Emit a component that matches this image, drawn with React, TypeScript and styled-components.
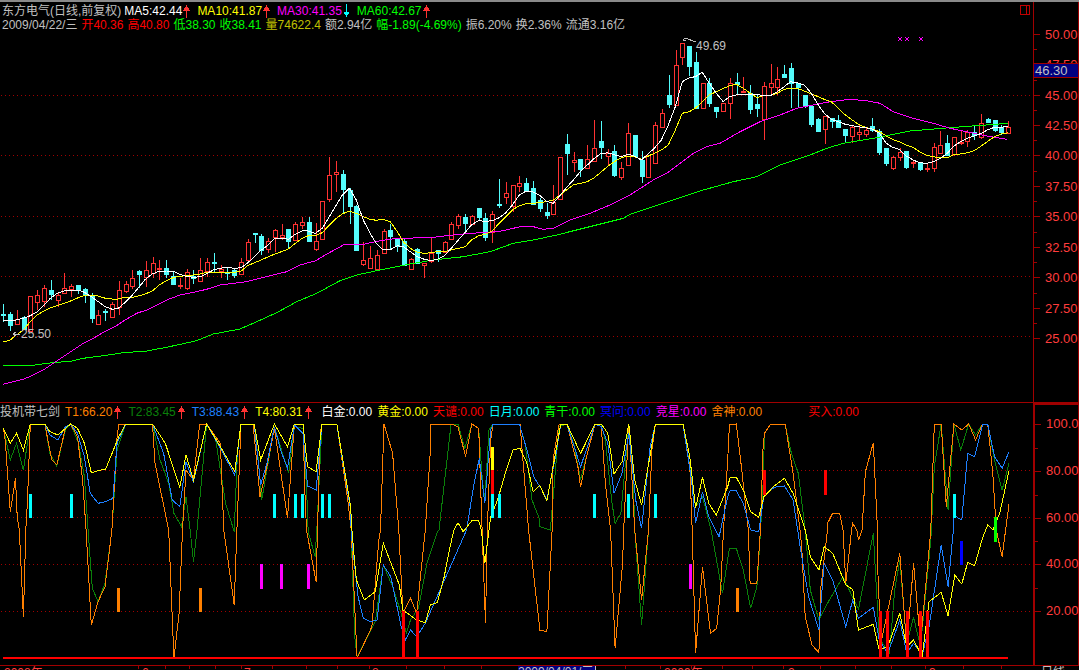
import React from 'react';
import styled, { createGlobalStyle } from 'styled-components';

const GlobalStyle = createGlobalStyle`
  html, body { margin: 0; background: #000; }
  body { font-family: "Liberation Sans", "Noto Sans CJK SC", sans-serif; font-size: 12px; }
`;

const colors = {
  grid: '#a00000',
  label: '#ff3c3c',
  grey: '#c0c0c0',
  up: '#ff3232',
  down: '#54fcfc',
  white: '#ffffff',
  yellow: '#ffff00',
  magenta: '#ff00ff',
  lime: '#00ff00',
  red: '#ff0000',
  orange: '#ff8000',
  forest: '#0a800a',
  sky: '#1e80ff',
  blue: '#0000ff',
  cyan: '#00ffff',
};

const Page = styled.div`
  width: 1079px;
  height: 670px;
  background: #000;
  overflow: hidden;
  display: flex;
  flex-direction: column;
  border-top: 2px solid #8a8a8a;
  box-sizing: border-box;
`;

const PricePanel = styled.div`
  height: 401px;
  display: flex;
  flex: none;
  border-bottom: 1px solid ${colors.grid};
  box-sizing: border-box;
`;

const IndicatorPanel = styled.div`
  height: 262px;
  display: flex;
  flex: none;
`;

const ChartArea = styled.div`
  position: relative;
  width: 1033px;
  flex: none;
`;

const Plot = styled.svg`
  display: block;
  width: 100%;
  height: 100%;
`;

const Axis = styled.div<{ $heavy?: boolean }>`
  position: relative;
  width: 44px;
  flex: none;
  box-sizing: content-box;
  border-left: ${(p) => (p.$heavy ? 2 : 1)}px solid ${colors.grid};
  border-right: 1px solid ${colors.grid};
  ${(p) => p.$heavy && `border-top: 2px solid ${colors.grid}; margin-left: 0; width: 43px;`}
`;

const Tick = styled.div<{ $major?: boolean }>`
  position: absolute;
  left: 0;
  height: 1px;
  width: ${(p) => (p.$major ? 6 : 3)}px;
  background: ${colors.grid};
`;

const TickLabel = styled.span`
  position: absolute;
  left: 11px;
  line-height: 14px;
  font-size: 13px;
  color: ${colors.label};
`;

const CurrentPrice = styled.div`
  position: absolute;
  left: 0;
  right: 0;
  top: 61px;
  height: 15px;
  box-sizing: border-box;
  padding-left: 1px;
  background: #000080;
  border-top: 1px solid ${colors.grid};
  border-bottom: 1px solid ${colors.grid};
  color: ${colors.grey};
  font-size: 13px;
  line-height: 13px;
`;

const PriceHeader = styled.div`
  position: absolute;
  top: 2px;
  left: 2px;
  display: flex;
  flex-direction: column;
  gap: 0;
`;

const HeaderRow = styled.div<{ $gap?: number }>`
  display: flex;
  align-items: center;
  height: 14px;
  gap: ${(p) => p.$gap ?? 0}px;
  white-space: nowrap;
  line-height: 14px;
`;

const Item = styled.span<{ $color: string; $right?: number }>`
  color: ${(p) => p.$color};
  margin-right: ${(p) => p.$right ?? 0}px;
`;

const Marked = styled.span<{ $right: number; $gap?: number }>`
  display: inline-flex;
  align-items: center;
  gap: ${(p) => p.$gap ?? 1}px;
  margin-right: ${(p) => p.$right}px;
`;

const IndicatorHeader = styled.div`
  position: absolute;
  top: 1px;
  left: 0;
  display: flex;
  align-items: center;
  height: 16px;
  white-space: nowrap;
  line-height: 16px;
`;

const PriceNote = styled.span`
  position: absolute;
  color: ${colors.grey};
  line-height: 14px;
`;

const WindowBox = styled.div`
  position: absolute;
  top: 3px;
  left: 1020px;
  width: 8px;
  height: 8px;
  border: 1px solid #c00000;
  &::after {
    content: '';
    position: absolute;
    top: 0;
    bottom: 0;
    right: 0;
    width: 2px;
    border-left: 1px solid #c00000;
  }
`;

const TimeBar = styled.div`
  display: flex;
  height: 5px;
  flex: none;
  border-top: 1px solid ${colors.grid};
  overflow: hidden;
`;

const TimeScale = styled.div`
  position: relative;
  width: 1033px;
  flex: none;
`;

const TimeTick = styled.i<{ $long?: boolean }>`
  position: absolute;
  top: 0;
  width: 1px;
  height: ${(p) => (p.$long ? 5 : 3)}px;
  background: ${colors.grid};
`;

const TimeLabel = styled.span`
  position: absolute;
  top: 1px;
  color: ${colors.label};
  font-size: 12px;
  line-height: 13px;
`;

const CursorDate = styled.span`
  position: absolute;
  top: 0;
  left: 518px;
  width: 77px;
  height: 5px;
  background: #000080;
  color: ${colors.grey};
  font-size: 12px;
  line-height: 13px;
  border-right: 1px solid ${colors.grey};
`;

const PeriodCell = styled.div`
  margin-left: 8px;
  color: ${colors.grey};
  font-size: 12px;
  line-height: 13px;
`;

/* ---------- price data, read off the chart in three strips ---------- */

type Row = [string, number, number, number, number];
type Candle = { up: boolean; top: number; bottom: number; hi: number; lo: number };
type Pt = [number, number];

const strip = (base: number, rows: Row[]): Candle[] =>
  rows.map(([k, a, b, h, l]) => ({
    up: k === 'r',
    top: base + a / 3,
    bottom: base + b / 3,
    hi: base + h / 3,
    lo: base + l / 3,
  }));

const candles: Candle[] = [
  ...strip(130, [
    ['c', 552, 554, 522, 575], ['c', 552, 585, 545, 603], ['r', 568, 582, 540, 585], ['c', 562, 596, 558, 600],
    ['r', 498, 603, 498, 606], ['r', 495, 515, 480, 540], ['r', 475, 513, 465, 530], ['c', 480, 492, 450, 510],
    ['r', 495, 510, 485, 530], ['r', 475, 490, 430, 492], ['r', 469, 477, 462, 500], ['c', 465, 478, 465, 492],
    ['c', 478, 495, 475, 520], ['c', 495, 564, 490, 578], ['r', 555, 581, 540, 583], ['c', 543, 546, 538, 573],
    ['r', 523, 560, 515, 560], ['r', 481, 530, 453, 555], ['r', 463, 484, 453, 490], ['r', 445, 468, 420, 478],
    ['c', 423, 431, 420, 475], ['r', 421, 441, 392, 470], ['r', 400, 429, 381, 445], ['r', 414, 417, 390, 450],
    ['c', 415, 431, 390, 445], ['c', 438, 461, 425, 462], ['r', 465, 467, 445, 476], ['r', 427, 473, 418, 480],
    ['c', 438, 445, 420, 462], ['r', 421, 452, 385, 453], ['r', 397, 422, 385, 440], ['c', 396, 400, 370, 430],
    ['r', 417, 423, 405, 445], ['c', 426, 429, 410, 450], ['c', 421, 435, 418, 443], ['r', 397, 433, 385, 435],
    ['r', 337, 391, 328, 392], ['c', 310, 313, 310, 340], ['c', 318, 360, 312, 375], ['r', 333, 358, 325, 370],
    ['r', 301, 320, 297, 365], ['r', 316, 320, 282, 330], ['c', 297, 332, 297, 355], ['r', 283, 330, 275, 332],
    ['r', 277, 284, 262, 297], ['c', 276, 332, 260, 335], ['r', 333, 356, 280, 362], ['r', 214, 326, 214, 327],
    ['r', 136, 206, 82, 215], ['r', 127, 133, 93, 185], ['c', 132, 177, 120, 252], ['c', 180, 227, 175, 282],
    ['c', 228, 359, 225, 359],
  ]),
  ...strip(100, [
    ['r', 481, 491, 425, 497], ['r', 475, 505, 438, 505], ['r', 466, 506, 450, 507], ['r', 394, 458, 388, 458],
    ['c', 390, 408, 372, 450], ['c', 416, 437, 416, 455], ['c', 423, 495, 418, 495], ['r', 478, 506, 475, 506],
    ['c', 447, 489, 445, 490], ['r', 490, 494, 490, 533], ['r', 459, 482, 413, 488], ['c', 451, 458, 451, 485],
    ['r', 427, 456, 423, 458], ['r', 373, 416, 365, 417], ['r', 349, 374, 342, 388], ['c', 351, 369, 343, 395],
    ['r', 349, 372, 345, 375], ['c', 324, 351, 324, 360], ['c', 354, 410, 340, 423], ['r', 343, 397, 333, 429],
    ['c', 312, 315, 237, 325], ['r', 280, 290, 247, 312], ['r', 256, 318, 255, 335], ['r', 250, 257, 228, 276],
    ['c', 250, 274, 235, 275], ['c', 264, 312, 243, 315], ['c', 301, 323, 295, 335], ['c', 335, 344, 308, 356],
    ['r', 305, 341, 255, 342], ['r', 172, 296, 172, 297], ['c', 132, 159, 102, 224], ['r', 181, 185, 156, 215],
    ['c', 178, 208, 177, 230], ['r', 176, 203, 135, 204], ['r', 145, 182, 60, 183], ['c', 123, 141, 63, 178],
    ['r', 158, 169, 148, 197], ['c', 153, 225, 135, 231], ['r', 205, 231, 187, 239], ['r', 100, 196, 70, 197],
    ['c', 105, 168, 105, 169], ['c', 180, 228, 153, 248], ['r', 166, 230, 165, 231], ['r', 76, 188, 67, 189],
    ['r', 40, 80, 28, 80],
  ]),
  ...strip(30, [
    ['c', 195, 222, 135, 233], ['r', 105, 225, 60, 228], ['r', 40, 80, 40, 105], ['c', 48, 107, 48, 138],
    ['c', 96, 235, 65, 236], ['r', 160, 235, 160, 236], ['c', 158, 218, 145, 230], ['c', 232, 242, 232, 264],
    ['r', 220, 242, 218, 244], ['r', 160, 220, 145, 268], ['c', 157, 163, 128, 195], ['r', 182, 186, 142, 188],
    ['c', 190, 237, 165, 252], ['c', 222, 233, 192, 262], ['r', 168, 268, 155, 330], ['r', 160, 170, 102, 198],
    ['r', 148, 170, 112, 195], ['c', 132, 142, 105, 145], ['c', 114, 160, 100, 235], ['c', 160, 172, 158, 235],
    ['c', 195, 228, 195, 235], ['c', 228, 283, 228, 292], ['c', 268, 303, 265, 305], ['r', 258, 296, 258, 342],
    ['c', 264, 273, 264, 295], ['c', 270, 290, 255, 292], ['c', 297, 315, 297, 340], ['r', 292, 317, 285, 338],
    ['r', 306, 312, 285, 330], ['r', 300, 312, 290, 322], ['c', 289, 300, 263, 305], ['c', 302, 365, 298, 374],
    ['c', 355, 398, 355, 408], ['r', 382, 414, 378, 420], ['r', 365, 380, 355, 392], ['c', 363, 412, 363, 418],
    ['r', 395, 398, 393, 415], ['c', 397, 416, 395, 422], ['r', 415, 418, 400, 425], ['r', 352, 413, 340, 425],
    ['r', 344, 368, 303, 370], ['c', 340, 375, 315, 378], ['r', 322, 373, 320, 378], ['r', 335, 340, 300, 345],
    ['r', 306, 332, 300, 352], ['c', 305, 315, 285, 330], ['r', 278, 320, 252, 326], ['c', 266, 275, 264, 277],
    ['c', 271, 300, 270, 305], ['c', 292, 305, 285, 315], ['r', 290, 310, 273, 312],
  ]),
];

const stitch = (a: Pt[], b: Pt[], c: Pt[]): Pt[] => [
  ...a.map(([x, y]): Pt => [x / 3, 130 + y / 3]).filter(([x]) => x < 345),
  ...b.map(([x, y]): Pt => [330 + x / 3, 100 + y / 3]).filter(([x]) => x >= 345 && x < 650),
  ...c.map(([x, y]): Pt => [640 + x / 3, 30 + y / 3]).filter(([x]) => x >= 650),
];

const ma5 = stitch(
  [[10,573],[31,571],[49,570],[70,565],[91,557],[112,545],[133,525],[151,505],[172,490],[193,483],[214,481],[235,480],[253,487],[274,500],[295,515],[316,530],[337,538],[355,535],[376,517],[397,495],[418,470],[436,448],[457,432],[478,423],[499,423],[520,424],[538,432],[559,439],[580,442],[601,440],[622,430],[640,420],[661,415],[682,412],[703,415],[724,413],[742,400],[763,380],[784,360],[805,345],[823,327],[844,324],[865,328],[886,313],[907,302],[925,303],[946,310],[967,295],[988,260],[1009,225],[1027,195],[1048,175]],
  [[0,345],[30,285],[58,265],[79,300],[100,360],[120,400],[139,430],[160,450],[181,449],[202,437],[220,440],[241,455],[262,470],[283,478],[304,482],[322,478],[343,467],[364,445],[385,420],[406,397],[424,375],[445,362],[466,364],[487,362],[508,353],[526,340],[547,315],[568,285],[589,273],[607,275],[628,285],[649,303],[670,310],[691,285],[712,260],[730,240],[751,215],[772,195],[793,175],[811,162],[832,158],[853,164],[874,170],[895,163],[913,168],[934,180]],
  [[0,385],[22,375],[43,355],[64,330],[85,285],[106,230],[127,155],[148,143],[166,140],[187,127],[208,160],[229,190],[250,215],[268,200],[289,195],[310,193],[331,193],[352,193],[370,197],[391,197],[412,185],[433,170],[451,155],[472,158],[493,165],[514,190],[535,225],[553,250],[574,268],[595,275],[616,283],[637,287],[655,290],[676,293],[697,297],[718,310],[739,340],[757,352],[778,358],[799,378],[820,390],[838,398],[859,400],[880,395],[901,385],[922,370],[940,350],[961,335],[982,325],[1003,318],[1024,310],[1042,300],[1063,292],[1084,292],[1105,288]],
);

const ma10 = stitch(
  [[10,636],[31,630],[49,615],[70,600],[91,575],[112,555],[133,542],[151,533],[172,527],[193,520],[214,512],[235,503],[253,497],[274,495],[295,498],[316,505],[337,507],[355,507],[376,502],[397,502],[418,497],[436,492],[457,483],[478,465],[499,452],[520,443],[538,439],[559,437],[580,435],[601,432],[622,427],[640,427],[661,427],[682,427],[703,427],[724,423],[742,408],[763,398],[784,390],[805,380],[823,373],[844,365],[865,357],[886,340],[907,325],[925,317],[946,317],[967,308],[988,285],[1009,265],[1027,252],[1048,245]],
  [[0,373],[20,350],[40,335],[58,333],[79,340],[100,350],[120,358],[139,361],[160,358],[181,365],[202,395],[220,425],[241,445],[262,457],[283,460],[304,458],[322,455],[343,455],[364,450],[385,445],[406,440],[424,420],[445,408],[466,403],[487,392],[508,370],[526,352],[547,330],[568,317],[589,311],[607,310],[628,308],[649,305],[670,300],[691,285],[712,268],[730,255],[751,250],[772,245],[793,233],[811,218],[832,200],[853,185],[874,173],[895,168],[913,170],[934,178]],
  [[0,383],[22,380],[43,370],[64,360],[85,345],[106,300],[127,250],[148,245],[166,235],[187,215],[208,195],[229,185],[250,175],[268,168],[289,163],[310,175],[331,190],[352,203],[370,197],[391,197],[412,190],[433,178],[451,175],[472,175],[493,183],[514,192],[535,200],[553,208],[574,215],[595,235],[616,255],[637,270],[655,283],[676,292],[697,297],[718,305],[739,318],[757,328],[778,335],[799,345],[820,352],[838,365],[859,376],[880,380],[901,384],[922,383],[940,375],[961,372],[982,368],[1003,362],[1024,348],[1042,335],[1063,320],[1084,312],[1105,308]],
);

const ma30 = stitch(
  [[10,763],[40,755],[70,748],[100,735],[130,720],[160,700],[190,680],[220,660],[250,640],[280,625],[310,607],[345,590],[380,567],[410,550],[440,540],[470,525],[500,510],[540,495],[580,487],[620,478],[660,465],[700,460],[740,455],[780,445],[820,435],[860,425],[900,405],[945,393],[985,370],[1030,345]],
  [[58,433],[100,433],[150,422],[200,415],[300,413],[350,407],[420,400],[480,397],[520,392],[570,380],[610,380],[640,388],[670,385],[720,360],[780,340],[840,315],[900,285],[960,260]],
  [[40,450],[80,430],[120,400],[160,370],[200,350],[240,340],[300,305],[360,275],[420,255],[470,235],[520,225],[570,215],[630,208],[680,212],[720,220],[760,245],[820,265],[880,280],[930,295],[980,305],[1040,318],[1100,328]],
);

const ma60 = stitch(
  [[10,706],[100,706],[140,700],[215,693],[250,685],[310,677],[370,668],[440,663],[500,652],[590,632],[640,612],[720,597],[770,575],[830,548],[890,515],[950,490],[1020,452]],
  [[40,535],[80,525],[150,510],[240,492],[310,480],[400,470],[480,455],[550,430],[610,420],[680,405],[760,385],[880,355],[900,343],[960,330]],
  [[190,480],[280,455],[350,440],[420,405],[510,375],[560,355],[610,340],[700,325],[810,303],[930,293],[1105,280]],
);

const lines = [
  { pts: ma60, color: colors.lime },
  { pts: ma30, color: colors.magenta },
  { pts: ma10, color: colors.yellow },
  { pts: ma5, color: colors.white },
];

/* ---------- indicator data: left half and right half of the panel ---------- */

const panel = (left: Pt[], right: Pt[]): string =>
  [
    ...left.map(([x, y]): Pt => [x / 2.904, 400 + y / 3]),
    ...right.map(([x, y]): Pt => [540 + x / 2.904, 400 + y / 3]),
  ]
    .map(([x, y]) => `${x.toFixed(1)},${y.toFixed(1)}`)
    .join(' ');

const t1 = panel(
  [[10,85],[15,120],[30,335],[45,235],[50,350],[56,390],[68,650],[75,390],[80,300],[88,72],[130,72],[150,180],[165,195],[190,85],[205,72],[225,110],[240,240],[250,390],[265,675],[285,605],[305,560],[325,390],[340,110],[345,72],[443,72],[450,190],[490,390],[505,775],[520,640],[530,390],[540,210],[562,240],[580,72],[600,72],[640,130],[650,390],[680,615],[688,390],[700,72],[735,72],[755,290],[775,200],[797,85],[835,355],[855,72],[880,72],[885,270],[890,390],[918,545],[922,390],[930,100],[935,72],[978,72],[1010,300],[1020,390],[1037,775],[1080,680],[1100,420],[1105,390],[1115,72],[1140,160],[1158,390],[1170,640],[1192,595],[1210,640],[1235,390],[1250,150],[1250,72],[1310,72],[1330,80],[1352,170],[1370,72],[1390,85],[1400,390],[1410,670],[1415,390],[1425,120],[1432,72],[1510,72],[1535,390],[1568,690]],
  [[0,690],[20,695],[35,390],[38,180],[55,75],[78,72],[110,200],[118,262],[135,170],[160,72],[178,80],[190,250],[205,390],[218,745],[240,490],[243,390],[255,130],[258,72],[265,200],[275,390],[295,600],[315,390],[325,150],[335,72],[415,72],[435,200],[442,390],[452,760],[472,500],[495,700],[513,685],[525,560],[533,390],[545,180],[550,75],[570,72],[585,200],[605,390],[610,550],[630,550],[640,390],[648,140],[652,100],[670,72],[712,72],[735,220],[755,390],[760,440],[770,650],[790,735],[810,758],[815,570],[835,390],[835,370],[850,340],[870,340],[880,390],[888,550],[905,390],[908,370],[920,390],[925,420],[935,390],[945,215],[968,128],[980,390],[980,490],[990,730],[1045,460],[1065,740],[1085,490],[1105,730],[1135,390],[1145,72],[1165,72],[1180,320],[1202,72],[1225,90],[1245,72],[1265,120],[1285,72],[1300,72],[1315,220],[1325,390],[1342,470],[1352,390],[1362,313]],
);

const t2 = panel(
  [[10,85],[30,180],[48,130],[68,210],[88,72],[130,72],[145,160],[165,198],[190,90],[205,72],[228,130],[245,230],[258,420],[268,565],[285,605],[305,550],[325,390],[340,150],[365,72],[443,72],[465,180],[490,250],[505,340],[527,380],[540,290],[552,390],[562,485],[572,390],[600,72],[625,110],[655,310],[680,395],[690,150],[700,72],[738,72],[750,180],[760,300],[797,80],[838,220],[855,80],[880,85],[890,260],[895,395],[915,470],[920,390],[935,72],[978,72],[1018,320],[1020,400],[1030,710],[1037,770],[1090,665],[1113,495],[1140,560],[1165,640],[1180,700],[1192,660],[1215,625],[1240,490],[1270,395],[1275,390],[1310,72],[1330,72],[1350,145],[1370,72],[1390,85],[1400,230],[1408,300],[1420,90],[1432,72],[1508,72],[1525,130],[1545,300],[1568,360]],
  [[0,380],[30,390],[40,270],[55,80],[78,72],[100,140],[118,240],[135,170],[160,72],[178,75],[190,120],[208,300],[218,370],[235,340],[258,80],[270,200],[275,390],[295,675],[315,390],[325,150],[335,72],[415,72],[440,230],[452,320],[472,290],[497,390],[530,580],[550,445],[570,445],[590,510],[612,625],[630,560],[640,400],[648,250],[652,100],[670,72],[712,72],[730,160],[750,220],[770,390],[785,570],[810,660],[840,600],[880,530],[912,600],[925,628],[968,400],[985,715],[1015,760],[1030,570],[1045,480],[1065,730],[1085,652],[1105,740],[1135,420],[1145,200],[1165,72],[1185,330],[1202,72],[1222,150],[1245,72],[1265,105],[1285,72],[1300,72],[1320,180],[1342,270],[1362,190]],
);

const t3 = panel(
  [[10,85],[30,130],[48,100],[68,150],[88,72],[130,72],[145,105],[168,120],[190,80],[205,72],[225,100],[245,170],[262,280],[285,310],[307,305],[328,295],[340,130],[365,72],[443,72],[475,160],[500,300],[522,320],[540,185],[562,245],[600,72],[640,145],[682,225],[700,72],[738,72],[757,255],[775,190],[797,80],[815,150],[835,205],[855,75],[880,100],[893,258],[918,270],[935,72],[978,72],[1018,330],[1020,400],[1028,480],[1040,590],[1055,655],[1075,665],[1095,660],[1113,495],[1135,530],[1165,680],[1178,720],[1192,690],[1210,710],[1235,670],[1355,390],[1375,260],[1392,175],[1408,310],[1425,90],[1432,72],[1508,72],[1530,150],[1550,230],[1568,260]],
  [[0,258],[20,300],[45,170],[60,75],[78,72],[118,200],[160,72],[178,80],[197,130],[215,280],[238,220],[258,100],[278,300],[295,385],[320,140],[335,72],[415,72],[440,240],[452,370],[472,275],[490,350],[520,410],[545,290],[552,272],[570,272],[590,310],[612,390],[635,395],[650,290],[680,262],[710,258],[735,300],[760,470],[780,590],[810,690],[825,490],[850,540],[888,680],[908,600],[925,655],[968,622],[985,720],[1010,760],[1045,660],[1065,760],[1085,730],[1110,765],[1130,680],[1165,435],[1185,560],[1200,395],[1200,345],[1225,360],[1242,160],[1262,170],[1285,75],[1300,72],[1320,170],[1342,205],[1362,155]],
);

const t4 = panel(
  [[10,85],[30,130],[48,100],[68,150],[88,72],[130,72],[145,95],[168,105],[205,72],[225,85],[245,130],[265,218],[285,212],[307,207],[345,110],[365,72],[443,72],[480,130],[522,262],[540,165],[562,240],[600,72],[640,140],[682,215],[700,72],[738,72],[757,180],[797,72],[835,140],[855,72],[880,72],[893,200],[918,215],[935,72],[978,72],[1018,320],[1022,390],[1030,490],[1035,540],[1058,600],[1090,575],[1113,430],[1160,555],[1170,630],[1190,645],[1210,660],[1235,668],[1250,615],[1270,608],[1290,530],[1305,450],[1318,390],[1330,368],[1345,395],[1370,362],[1390,362],[1398,390],[1408,490],[1420,390],[1425,350],[1445,300],[1470,210],[1490,150],[1510,145],[1530,190],[1548,275],[1568,255]],
  [[0,258],[20,303],[45,160],[60,72],[78,72],[118,160],[160,72],[178,72],[197,100],[215,222],[238,185],[258,72],[275,240],[295,315],[335,72],[415,72],[435,170],[452,325],[472,232],[490,310],[512,345],[545,260],[552,232],[570,232],[590,270],[612,335],[635,352],[650,290],[680,258],[710,235],[735,280],[770,390],[785,470],[810,510],[825,440],[850,460],[888,555],[908,568],[925,690],[968,673],[985,750],[1010,740],[1045,640],[1065,740],[1085,720],[1110,770],[1130,605],[1165,577],[1185,648],[1205,525],[1225,552],[1242,487],[1262,497],[1285,415],[1300,375],[1315,390],[1335,340],[1362,212]],
);

type Bar = { x: number; top: number; bottom: number; color: string };

const barsAt = (xs: number[], top: number, bottom: number, color: string, right = false): Bar[] =>
  xs.map((x) => ({ x: (right ? 540 : 0) + x / 2.904, top, bottom, color }));

const bars: Bar[] = [
  ...barsAt([88, 207, 797, 858, 878, 936, 956, 1430, 1450], 494, 518, colors.cyan),
  ...barsAt([158, 257, 335, 1203], 494, 518, colors.cyan, true),
  ...barsAt([1430], 447, 470, colors.yellow),
  ...barsAt([1430], 470, 494, colors.red),
  ...barsAt([650, 827], 470, 495, colors.red, true),
  ...barsAt([759, 817, 895], 564, 589, colors.magenta),
  ...barsAt([435], 564, 589, colors.magenta, true),
  ...barsAt([344, 582], 588, 612, colors.orange),
  ...barsAt([571], 588, 612, colors.orange, true),
  ...barsAt([1223], 541, 565, colors.blue, true),
  ...barsAt([1322], 517, 542, colors.lime, true),
  ...barsAt([1171, 1212], 611, 659, colors.red),
  ...barsAt([988, 1008, 1066, 1104, 1125], 611, 659, colors.red, true),
];

const priceTicks = [
  { y: 34, label: '50.00' }, { y: 64, label: '47.50' }, { y: 95, label: '45.00' },
  { y: 125, label: '42.50' }, { y: 155, label: '40.00' }, { y: 186, label: '37.50' },
  { y: 216, label: '35.00' }, { y: 247, label: '32.50' }, { y: 277, label: '30.00' },
  { y: 308, label: '27.50' }, { y: 338, label: '25.00' },
];

const indicatorTicks = [
  { y: 424, label: '100.0' }, { y: 471, label: '80.00' }, { y: 518, label: '60.00' },
  { y: 564, label: '40.00' }, { y: 611, label: '20.00' },
];

const timeTicks = [138, 165, 189, 215, 241, 272, 306, 337, 369, 406, 444, 481, 518, 595, 625, 660, 691, 722, 752, 783, 820, 855, 891, 925, 963, 1001];
const timeLabels = [
  { x: 4, text: '2008年' }, { x: 142, text: '6' }, { x: 244, text: '7' }, { x: 372, text: '8' },
  { x: 664, text: '2009年' }, { x: 788, text: '2' }, { x: 929, text: '3' },
];

const Arrow = ({ up = true }: { up?: boolean }) => {
  const color = up ? colors.up : colors.cyan;
  return (
    <svg width="7" height="14" viewBox="0 0 7 14">
      {up ? (
        <path d="M3.5 2v12M1 6l2.5-4L6 6z" stroke={color} fill={color} shapeRendering="crispEdges" />
      ) : (
        <path d="M3.5 0v11M1 8l2.5 4L6 8z" stroke={color} fill={color} shapeRendering="crispEdges" />
      )}
    </svg>
  );
};

const Candles = () => (
  <g shapeRendering="crispEdges">
    {candles.map((c, i) => {
      const x = Math.round(3.3 + i * 6.79);
      const color = c.up ? colors.up : colors.down;
      const top = Math.round(c.top);
      const bottom = Math.max(Math.round(c.bottom), top + 1);
      return (
        <g key={i}>
          <line x1={x + 0.5} x2={x + 0.5} y1={c.hi} y2={top} stroke={color} />
          <line x1={x + 0.5} x2={x + 0.5} y1={bottom} y2={c.lo} stroke={color} />
          {c.up ? (
            <rect x={x - 1.5} y={top + 0.5} width={4} height={bottom - top} fill="#000" stroke={color} />
          ) : (
            <rect x={x - 2} y={top} width={5} height={bottom - top + 1} fill={color} />
          )}
        </g>
      );
    })}
  </g>
);

const Dotted = ({ ys }: { ys: number[] }) => (
  <g shapeRendering="crispEdges">
    {ys.map((y) => (
      <line key={y} x1={1} x2={1033} y1={y + 0.5} y2={y + 0.5} stroke={colors.grid} strokeDasharray="1 3" />
    ))}
  </g>
);

const Scale = ({ ticks, origin, labelShift = 0 }: { ticks: { y: number; label: string }[]; origin: number; labelShift?: number }) => (
  <>
    {ticks.map((t, i) => (
      <React.Fragment key={t.y}>
        <Tick $major style={{ top: t.y - origin }} />
        {i < ticks.length - 1 && <Tick style={{ top: Math.round((t.y + ticks[i + 1].y) / 2) - origin }} />}
        <TickLabel style={{ top: t.y - origin - 7 + labelShift }}>{t.label}</TickLabel>
      </React.Fragment>
    ))}
  </>
);

const App = () => {
  const toPoints = (pts: Pt[]) => pts.map(([x, y]) => `${x.toFixed(1)},${y.toFixed(1)}`).join(' ');

  return (
    <Page>
      <GlobalStyle />
      <PricePanel>
        <ChartArea>
          <Plot viewBox="0 2 1033 400">
            <Dotted ys={[95, 155, 216, 276, 336]} />
            <Candles />
            <g fill="none" shapeRendering="crispEdges">
              {lines.map((l) => (
                <polyline key={l.color} points={toPoints(l.pts)} stroke={l.color} />
              ))}
            </g>
            <g stroke={colors.grey} fill="none" shapeRendering="crispEdges">
              <path d="M696 42l-11-4 -2 2 3 1M13 334h7M13 334l3-2M13 334l3 2" />
            </g>
            <g stroke={colors.magenta} shapeRendering="crispEdges">
              {[900, 907, 921].map((x) => (
                <path key={x} d={`M${x - 2} 37l4 4M${x + 2} 37l-4 4`} />
              ))}
            </g>
          </Plot>
          <PriceHeader>
            <HeaderRow>
              <Item $color={colors.grey} $right={3}>东方电气(日线,前复权)</Item>
              <Marked $right={7}><Item $color={colors.white}>MA5:42.44</Item><Arrow /></Marked>
              <Marked $right={7}><Item $color={colors.yellow}>MA10:41.87</Item><Arrow /></Marked>
              <Marked $right={7}><Item $color={colors.magenta}>MA30:41.35</Item><Arrow up={false} /></Marked>
              <Marked $right={7}><Item $color={colors.lime}>MA60:42.67</Item><Arrow /></Marked>
            </HeaderRow>
            <HeaderRow $gap={4}>
              <Item $color={colors.grey}>2009/04/22/三</Item>
              <Item $color={colors.red}>开40.36</Item>
              <Item $color={colors.red}>高40.80</Item>
              <Item $color={colors.lime}>低38.30</Item>
              <Item $color={colors.lime}>收38.41</Item>
              <Item $color="#c0c000">量74622.4</Item>
              <Item $color={colors.grey}>额2.94亿</Item>
              <Item $color={colors.lime}>幅-1.89(-4.69%)</Item>
              <Item $color={colors.grey}>振6.20%</Item>
              <Item $color={colors.grey}>换2.36%</Item>
              <Item $color={colors.grey}>流通3.16亿</Item>
            </HeaderRow>
          </PriceHeader>
          <PriceNote style={{ left: 696, top: 37 }}>49.69</PriceNote>
          <PriceNote style={{ left: 21, top: 325 }}>25.50</PriceNote>
          <WindowBox />
        </ChartArea>
        <Axis>
          <Scale ticks={priceTicks} origin={2} labelShift={1} />
          <CurrentPrice>46.30</CurrentPrice>
        </Axis>
      </PricePanel>

      <IndicatorPanel>
        <ChartArea>
          <Plot viewBox="0 403 1033 262">
            <Dotted ys={[470, 517, 564, 611]} />
            <g fill="none" shapeRendering="crispEdges">
              <polyline points={t2} stroke={colors.forest} />
              <polyline points={t1} stroke={colors.orange} />
              <polyline points={t3} stroke={colors.sky} />
              <polyline points={t4} stroke={colors.yellow} />
            </g>
            <rect x={3} y={657} width={1005} height={2} fill={colors.red} shapeRendering="crispEdges" />
            <g shapeRendering="crispEdges">
              {bars.map((b, i) => (
                <rect key={i} x={Math.round(b.x) - 1} y={b.top} width={3} height={b.bottom - b.top} fill={b.color} />
              ))}
            </g>
          </Plot>
          <IndicatorHeader>
            <Item $color={colors.grey} $right={5}>投机带七剑</Item>
            <Marked $right={7} $gap={2}><Item $color={colors.orange}>T1:66.20</Item><Arrow /></Marked>
            <Marked $right={7} $gap={2}><Item $color={colors.forest}>T2:83.45</Item><Arrow /></Marked>
            <Marked $right={7} $gap={2}><Item $color={colors.sky}>T3:88.43</Item><Arrow /></Marked>
            <Marked $right={10} $gap={2}><Item $color={colors.yellow}>T4:80.31</Item><Arrow /></Marked>
            <Item $color={colors.white} $right={5}>白金:0.00</Item>
            <Item $color={colors.yellow} $right={5}>黄金:0.00</Item>
            <Item $color={colors.red} $right={5}>天谴:0.00</Item>
            <Item $color={colors.cyan} $right={5}>日月:0.00</Item>
            <Item $color={colors.lime} $right={5}>青干:0.00</Item>
            <Item $color={colors.blue} $right={5}>冥问:0.00</Item>
            <Item $color={colors.magenta} $right={5}>竞星:0.00</Item>
            <Item $color={colors.orange} $right={46}>舍神:0.00</Item>
            <Item $color={colors.red}>买入:0.00</Item>
          </IndicatorHeader>
        </ChartArea>
        <Axis $heavy>
          <Scale ticks={indicatorTicks} origin={405} />
        </Axis>
      </IndicatorPanel>

      <TimeBar>
        <TimeScale>
          {timeTicks.map((x) => (
            <TimeTick key={x} style={{ left: x }} />
          ))}
          {timeLabels.map((l) => (
            <TimeLabel key={l.x} style={{ left: l.x }}>{l.text}</TimeLabel>
          ))}
          <CursorDate>2009/04/01/三</CursorDate>
        </TimeScale>
        <PeriodCell>日线</PeriodCell>
      </TimeBar>
    </Page>
  );
};

export default App;
